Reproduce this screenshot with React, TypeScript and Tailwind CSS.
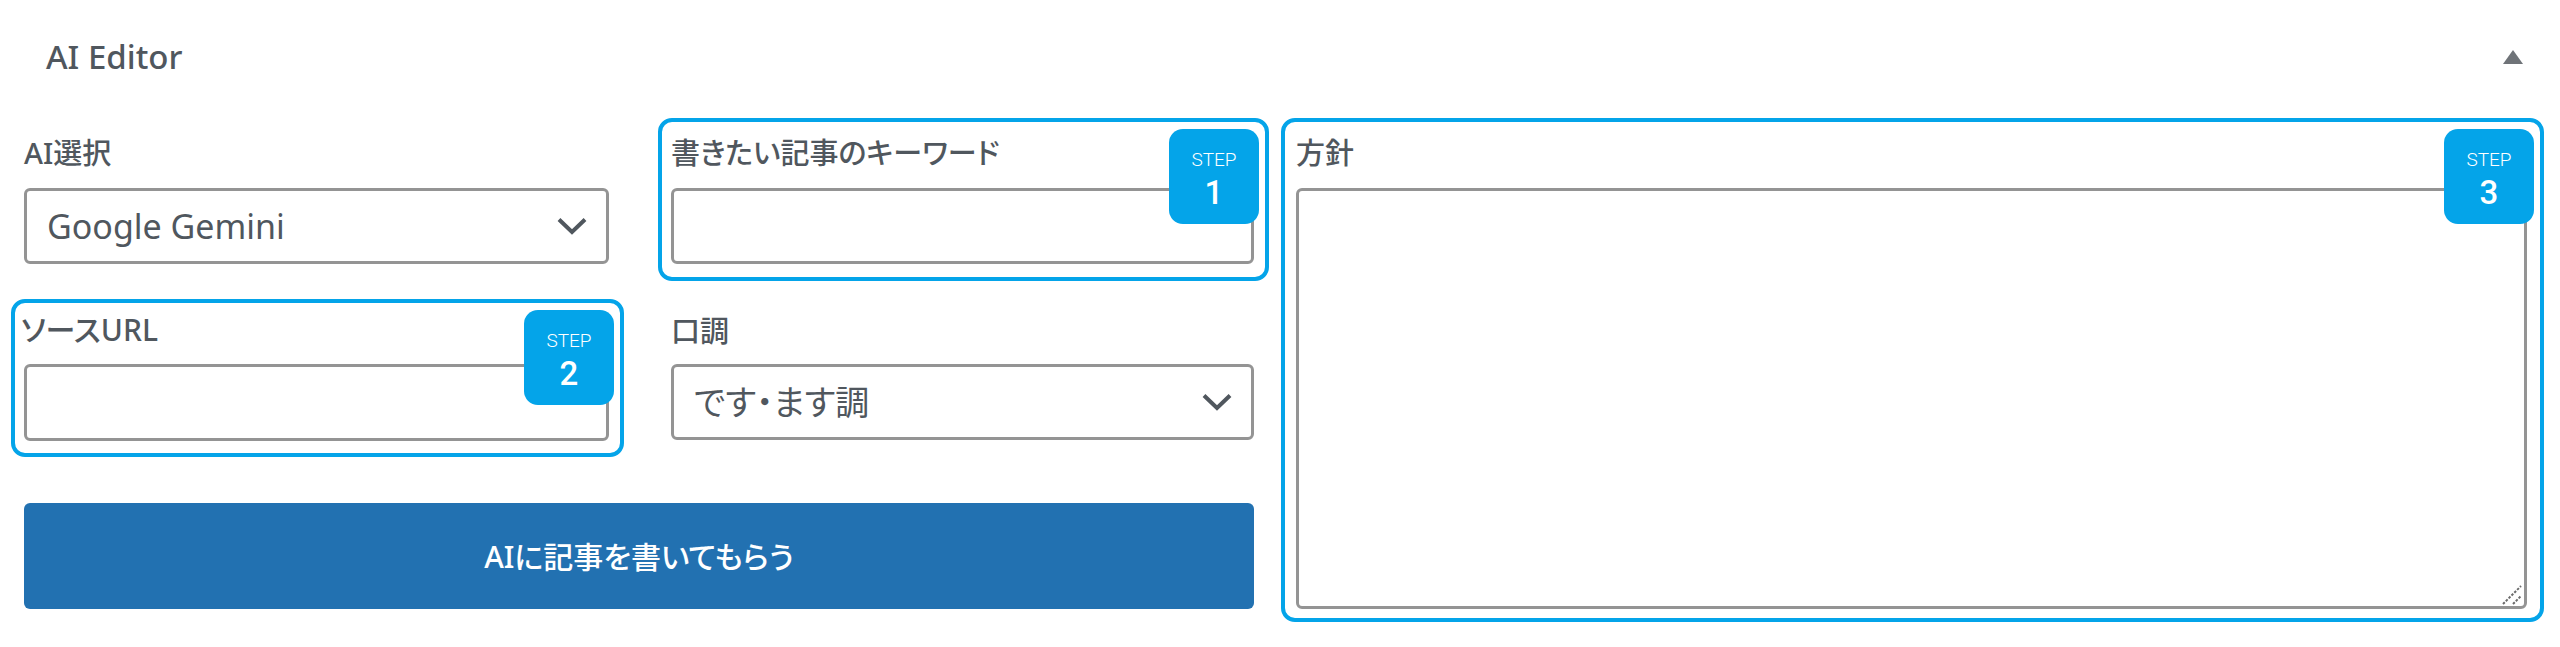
import type { ReactNode } from "react";

const sans = "font-['Noto_Sans','Noto_Sans_CJK_JP',sans-serif]";

function StepBadge({ step, className }: { step: number; className: string }) {
  return (
    <div
      className={`absolute z-10 flex h-[95px] w-[90px] flex-col items-center rounded-[14px] bg-[#04a4e9] pt-[20px] font-['Roboto',sans-serif] text-white ${className}`}
    >
      <span className="text-[19px] font-light leading-[22px]">STEP</span>
      <span className="mt-[3px] text-[33px] font-medium leading-[38px]">{step}</span>
    </div>
  );
}

function Label({ children, className = "" }: { children: ReactNode; className?: string }) {
  return (
    <label
      className={`flex h-[56px] items-center pb-[16px] text-[29px] font-medium leading-none text-[#50575e] [font-feature-settings:'palt'] ${className}`}
    >
      {children}
    </label>
  );
}

function Chevron() {
  return (
    <svg
      className="pointer-events-none absolute right-[22px] top-1/2 -translate-y-1/2"
      width="30"
      height="18"
      viewBox="0 0 30 18"
      fill="none"
      stroke="#50575e"
      strokeWidth="4"
    >
      <path d="M2 2.5 L15 15 L28 2.5" />
    </svg>
  );
}

function SelectField({ label, options, labelClass }: { label: string; options: string[]; labelClass?: string }) {
  return (
    <div>
      <Label className={labelClass}>{label}</Label>
      <div className="relative">
        <select className="h-[76px] w-full appearance-none rounded-[6px] border-[3px] border-[#949494] bg-white pl-[20px] text-[34px] text-[#50575e] [font-feature-settings:'palt']">
          {options.map((o) => (
            <option key={o}>{o}</option>
          ))}
        </select>
        <Chevron />
      </div>
    </div>
  );
}

export default function App() {
  return (
    <div className={`h-[647px] w-full overflow-hidden bg-white ${sans}`}>
      <div className="flex h-[114px] items-center justify-between pl-[46px] pr-[36px]">
        <h2 className="text-[33px] font-medium text-[#50575e]">AI Editor</h2>
        <svg width="22" height="16" viewBox="0 0 22 16" fill="#6f7378">
          <path d="M11 1 L21 15 L1 15 Z" />
        </svg>
      </div>

      <div className="grid grid-cols-[1230px_1231px] gap-x-[42px] pl-[24px] pt-[18px]">
        <div className="grid grid-cols-[585px_583px] gap-x-[62px] gap-y-[44px]">
          <SelectField label="AI選択" options={["Google Gemini"]} />

          <div className="relative">
            <div className="pointer-events-none absolute -bottom-[17px] -left-[13px] -right-[15px] -top-[14px] rounded-[14px] border-[4px] border-[#04a4e9]" />
            <StepBadge step={1} className="-right-[5px] -top-[3px]" />
            <Label>書きたい記事のキーワード</Label>
            <input className="block h-[76px] w-full rounded-[6px] border-[3px] border-[#949494] bg-white" />
          </div>

          <div className="relative">
            <div className="pointer-events-none absolute -bottom-[16px] -left-[13px] -right-[15px] -top-[9px] rounded-[14px] border-[4px] border-[#04a4e9]" />
            <StepBadge step={2} className="-right-[5px] top-[2px]" />
            <Label className="-ml-[3px] translate-y-[2px] text-[30px]">ソースURL</Label>
            <input className="block h-[77px] w-full rounded-[6px] border-[3px] border-[#949494] bg-white" />
          </div>

          <SelectField label="口調" labelClass="translate-y-[2px]" options={["です・ます調"]} />

          <button className="col-span-2 mt-[18px] h-[106px] rounded-[6px] bg-[#2271b1] text-[30px] font-medium text-white [font-feature-settings:'palt']">
            AIに記事を書いてもらう
          </button>
        </div>

        <div className="relative flex flex-col">
          <div className="pointer-events-none absolute -bottom-[13px] -left-[15px] -right-[17px] -top-[14px] rounded-[14px] border-[4px] border-[#04a4e9]" />
          <StepBadge step={3} className="-right-[7px] -top-[3px]" />
          <Label>方針</Label>
          <div className="relative flex-1">
            <textarea className="block h-full w-full resize-none rounded-[6px] border-[3px] border-[#949494] bg-white" />
            <svg
              className="pointer-events-none absolute bottom-[4px] right-[5px]"
              width="20"
              height="20"
              viewBox="0 0 20 20"
              stroke="#6b6b6b"
              strokeWidth="2"
              strokeDasharray="2.5 1.5"
            >
              <path d="M1 19 L19 1" />
              <path d="M11 19 L19 11" />
            </svg>
          </div>
        </div>
      </div>
    </div>
  );
}
